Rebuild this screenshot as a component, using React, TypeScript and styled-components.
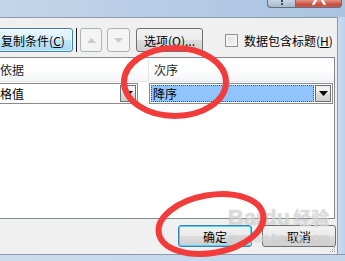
import React from 'react';
import styled, { createGlobalStyle } from 'styled-components';

const GlobalS = createGlobalStyle`
  html, body {
    margin: 0;
    padding: 0;
  }
  body {
    width: 345px;
    height: 261px;
    overflow: hidden;
    font-family: "Noto Sans CJK SC", "Noto Sans", sans-serif;
    font-size: 12px;
    color: #000;
  }
`;

const Arrow: React.FC<{ up?: boolean; color?: string }> = ({ up, color = '#000' }) => (
  <svg width="9" height="5" viewBox="0 0 9 5">
    <path d={up ? 'M0 5 L4.5 0 L9 5 Z' : 'M0 0 L9 0 L4.5 5 Z'} fill={color} />
  </svg>
);

export default function App() {
  return (
    <>
      <GlobalS />
      <WindowS>
        <TitleBarS>
          <HelpBtnS>
            {/* only the bottom of the "?" glyph shows under the screen edge */}
            <svg width="8" height="6" viewBox="0 0 8 6">
              <rect x="3" y="0" width="2" height="2" fill="#3d4a5c" />
              <rect x="3" y="3" width="2" height="2" fill="#3d4a5c" />
            </svg>
          </HelpBtnS>
          <CloseBtnS>
            <svg width="14" height="5" viewBox="0 0 14 5">
              <path d="M1 5 L4 0 M13 5 L10 0" stroke="#fff" strokeWidth="2.4" />
            </svg>
          </CloseBtnS>
        </TitleBarS>
        <BodyRowS>
          <ClientS>
            <ToolbarS>
              <CopyBtnS>
                复制条件(<u>C</u>)
              </CopyBtnS>
              <SeparatorS />
              <ArrowBtnS>
                <Arrow up color="#c9c9c9" />
              </ArrowBtnS>
              <ArrowBtnS $wide>
                <Arrow color="#c9c9c9" />
              </ArrowBtnS>
              <OptionsBtnS>
                选项(<u>O</u>)...
              </OptionsBtnS>
              <CheckLabelS>
                <CheckBoxS />
                数据包含标题(<u>H</u>)
              </CheckLabelS>
            </ToolbarS>

            <ListBoxS>
              <HeaderRowS>
                <HeaderCellS $w={148}>依据</HeaderCellS>
                <HeaderCellS $w={186} $divider>
                  次序
                </HeaderCellS>
              </HeaderRowS>
              <DataRowS>
                <ComboS $w={138}>
                  <ComboTextS>格值</ComboTextS>
                  <DropBtnS>
                    <Arrow />
                  </DropBtnS>
                </ComboS>
                <ComboS $w={184} $active>
                  <SelectedS>降序</SelectedS>
                  <DropBtnS>
                    <Arrow />
                  </DropBtnS>
                </ComboS>
              </DataRowS>
            </ListBoxS>

            <FooterS>
              <DialogBtnS $default>确定</DialogBtnS>
              <DialogBtnS>取消</DialogBtnS>
              <GripS>
                <svg width="6" height="6" viewBox="0 0 6 6">
                  <rect x="4" y="0" width="1" height="1" fill="#9a9a9a" />
                  <rect x="2" y="2" width="1" height="1" fill="#9a9a9a" />
                  <rect x="4" y="2" width="1" height="1" fill="#9a9a9a" />
                  <rect x="0" y="4" width="1" height="1" fill="#9a9a9a" />
                  <rect x="2" y="4" width="1" height="1" fill="#9a9a9a" />
                  <rect x="4" y="4" width="1" height="1" fill="#9a9a9a" />
                </svg>
              </GripS>
            </FooterS>
          </ClientS>
          <SideFrameS />
        </BodyRowS>
        <BottomFrameS />

        <WatermarkS>
          <MarkTopS>
            Bai<PawS>du</PawS>
            <MarkCnS>经验</MarkCnS>
          </MarkTopS>
          <MarkUrlS>jingyan.baidu.com</MarkUrlS>
        </WatermarkS>

        <MarksS width="345" height="261" viewBox="0 0 345 261">
          <ellipse cx="175" cy="82" rx="51" ry="34" fill="none" stroke="#f23b3b" strokeWidth="6" />
          <ellipse
            cx="211"
            cy="224"
            rx="53"
            ry="29"
            fill="none"
            stroke="#f23b3b"
            strokeWidth="6"
            transform="rotate(-10 211 224)"
          />
        </MarksS>
      </WindowS>
    </>
  );
}

const WindowS = styled.div`
  position: relative;
  width: 345px;
  height: 261px;
  display: flex;
  flex-direction: column;
  overflow: hidden;
  background: #cbdbec;
`;

const TitleBarS = styled.div`
  height: 17px;
  flex: none;
  display: flex;
  justify-content: flex-end;
  align-items: flex-start;
  padding-right: 3px;
  background: linear-gradient(90deg, #c3d6ea 0%, #b7cde6 45%, #a9c3e0 100%);
`;

const CaptionBtnS = styled.div`
  height: 8px;
  box-sizing: border-box;
  border: 1px solid #5f6f84;
  border-top: none;
  display: flex;
  justify-content: center;
  align-items: flex-start;
  overflow: hidden;
`;

const HelpBtnS = styled(CaptionBtnS)`
  width: 28px;
  border-right: none;
  border-radius: 0 0 0 4px;
  background: linear-gradient(180deg, #c7d4e3 0%, #a9b8cb 100%);
`;

const CloseBtnS = styled(CaptionBtnS)`
  width: 47px;
  border-radius: 0 0 4px 0;
  background: linear-gradient(180deg, #e29486 0%, #c9493a 70%, #d1614e 100%);
`;

const BodyRowS = styled.div`
  flex: 1;
  display: flex;
  min-height: 0;
`;

const ClientS = styled.div`
  width: 338px;
  flex: none;
  display: flex;
  flex-direction: column;
  background: #f0f0f0;
  border-top: 1px solid #8a99ad;
  border-right: 1px solid #8a99ad;
  box-sizing: border-box;
`;

const SideFrameS = styled.div`
  flex: 1;
  background: linear-gradient(90deg, #c9dbee, #bdd2ea);
`;

const BottomFrameS = styled.div`
  height: 6px;
  flex: none;
  background: linear-gradient(90deg, #cbdcee, #c2d5ea);
  border-top: 1px solid #8a99ad;
`;

const ToolbarS = styled.div`
  display: flex;
  align-items: center;
  height: 24px;
  margin-top: 10px;
`;

const ButtonS = styled.div`
  height: 24px;
  box-sizing: border-box;
  border: 1px solid #707070;
  border-radius: 3px;
  display: flex;
  align-items: center;
  justify-content: center;
  background: linear-gradient(180deg, #f2f2f2 0%, #ebebeb 49%, #dddddd 50%, #cfcfcf 100%);
  white-space: nowrap;
  u {
    text-decoration: underline;
    text-underline-offset: 1px;
  }
`;

const CopyBtnS = styled(ButtonS)`
  width: 80px;
  margin-left: -7px;
  border-color: #3c7fb1;
  background: linear-gradient(180deg, #eaf6fd 0%, #d9f0fc 49%, #bee6fd 50%, #a7d9f5 100%);
  box-shadow: inset 0 0 0 1px rgba(255, 255, 255, 0.6);
`;

const SeparatorS = styled.div`
  width: 1px;
  height: 24px;
  margin: 0 3px 0 3px;
  background: #1e1e1e;
`;

const ArrowBtnS = styled(ButtonS)<{ $wide?: boolean }>`
  width: ${(p) => (p.$wide ? 23 : 22)}px;
  margin-right: ${(p) => (p.$wide ? 6 : 5)}px;
  border-color: #adb2b5;
  background: #f4f4f4;
`;

const OptionsBtnS = styled(ButtonS)`
  width: 67px;
`;

const CheckLabelS = styled.div`
  display: flex;
  align-items: center;
  margin-left: 22px;
  white-space: nowrap;
  u {
    text-decoration: underline;
    text-underline-offset: 1px;
  }
`;

const CheckBoxS = styled.div`
  width: 13px;
  height: 13px;
  box-sizing: border-box;
  border: 1px solid #8e8f8f;
  background: linear-gradient(135deg, #dcdcdc 0%, #f6f6f6 100%);
  box-shadow: inset 0 0 0 2px #f4f4f4;
  margin-right: 6px;
`;

const ListBoxS = styled.div`
  margin-top: 5px;
  margin-right: 2px;
  height: 162px;
  box-sizing: border-box;
  border: 1px solid #828790;
  border-left: none;
  background: #fff;
  display: flex;
  flex-direction: column;
`;

const HeaderRowS = styled.div`
  display: flex;
  height: 23px;
  flex: none;
  border-bottom: 1px solid #e3e6ea;
  background: linear-gradient(180deg, #ffffff 0%, #ffffff 50%, #f3f4f6 100%);
`;

const HeaderCellS = styled.div<{ $w: number; $divider?: boolean }>`
  width: ${(p) => p.$w}px;
  box-sizing: border-box;
  display: flex;
  align-items: center;
  padding-left: ${(p) => (p.$divider ? 5 : 0)}px;
  border-left: ${(p) => (p.$divider ? '1px solid #e3e6ea' : 'none')};
  color: #1e1e1e;
`;

const DataRowS = styled.div`
  display: flex;
  align-items: center;
  gap: 11px;
  margin-top: 1px;
`;

const ComboS = styled.div<{ $w: number; $active?: boolean }>`
  width: ${(p) => p.$w}px;
  height: 21px;
  box-sizing: border-box;
  border: 1px solid #8a8a8a;
  border-left: ${(p) => (p.$active ? '1px solid #8a8a8a' : 'none')};
  display: flex;
  align-items: stretch;
  padding: 1px;
  padding-left: ${(p) => (p.$active ? 1 : 0)}px;
  background: #fff;
`;

const ComboTextS = styled.div`
  flex: 1;
  display: flex;
  align-items: center;
`;

const SelectedS = styled.div`
  flex: 1;
  display: flex;
  align-items: center;
  padding-left: 2px;
  background: #90c4fb;
  outline: 1px dotted #7a4a12;
  outline-offset: -1px;
  margin-right: 1px;
`;

const DropBtnS = styled.div`
  width: 16px;
  box-sizing: border-box;
  border: 1px solid #707070;
  display: flex;
  align-items: center;
  justify-content: center;
  background: linear-gradient(180deg, #f2f2f2 0%, #ebebeb 49%, #dddddd 50%, #cfcfcf 100%);
`;

const FooterS = styled.div`
  position: relative;
  flex: 1;
  display: flex;
  justify-content: flex-end;
  align-items: flex-start;
  gap: 10px;
  padding-top: 6px;
  padding-right: 1px;
`;

const DialogBtnS = styled(ButtonS)<{ $default?: boolean }>`
  width: 74px;
  height: 22px;
  border-color: ${(p) => (p.$default ? '#3c7fb1' : '#707070')};
  box-shadow: ${(p) => (p.$default ? 'inset 0 0 0 1px #48d8fb' : 'none')};
`;

const GripS = styled.div`
  position: absolute;
  right: 1px;
  bottom: 1px;
  display: flex;
`;

const WatermarkS = styled.div`
  position: absolute;
  left: 228px;
  top: 204px;
  display: flex;
  flex-direction: column;
  align-items: flex-start;
  pointer-events: none;
  color: rgba(255, 255, 255, 0.55);
  text-shadow: 0 0 1px rgba(120, 120, 120, 0.6);
`;

const MarkTopS = styled.div`
  display: flex;
  align-items: baseline;
  font-family: "Liberation Sans", sans-serif;
  font-weight: bold;
  font-size: 22px;
  line-height: 26px;
`;

const PawS = styled.span`
  margin-left: 1px;
`;

const MarkCnS = styled.span`
  font-family: "Noto Sans CJK SC", sans-serif;
  font-size: 18px;
  margin-left: 3px;
`;

const MarkUrlS = styled.div`
  font-family: "Liberation Sans", sans-serif;
  font-size: 12px;
  line-height: 14px;
  letter-spacing: 0.3px;
`;

const MarksS = styled.svg`
  position: absolute;
  left: 0;
  top: 0;
  pointer-events: none;
`;
